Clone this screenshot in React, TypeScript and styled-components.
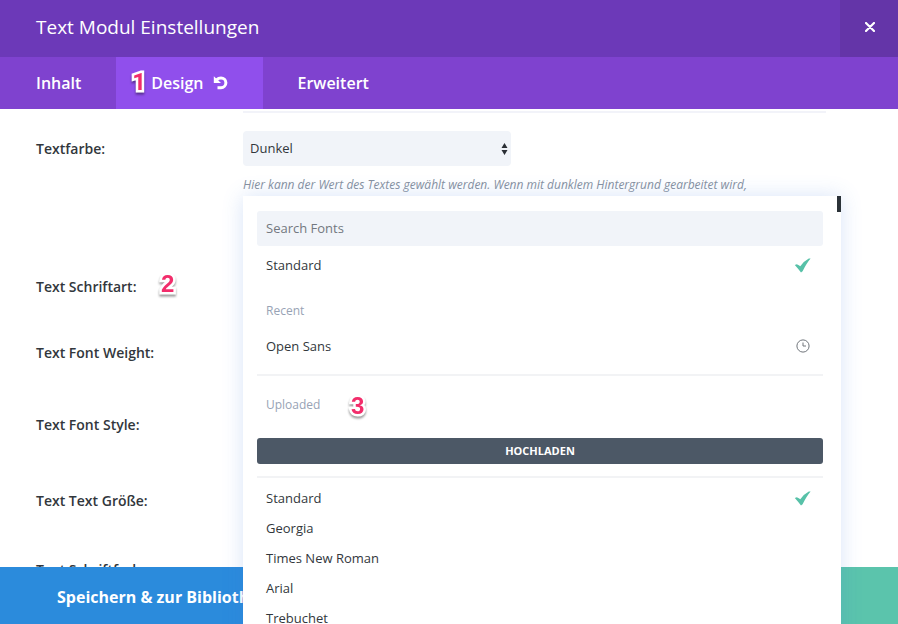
import React from "react";
import styled, { createGlobalStyle } from "styled-components";

const GlobalStyle = createGlobalStyle`
  *, *::before, *::after { box-sizing: border-box; }
  body {
    margin: 0;
    background: #fff;
    color: #32373c;
    font-family: "Open Sans", "Noto Sans", sans-serif;
    font-size: 13px;
  }
  button, input, select { font: inherit; color: inherit; }
`;

const Modal = styled.div`
  display: flex;
  flex-direction: column;
  height: 100vh;
  overflow: hidden;
`;

const Header = styled.header`
  display: flex;
  flex: none;
  align-items: stretch;
  justify-content: space-between;
  height: 57px;
  padding-left: 36px;
  background: #6c39b8;
  color: #fff;
`;

const Title = styled.h1`
  margin: 0;
  font-size: 19px;
  font-weight: 400;
  line-height: 54px;
`;

const CloseButton = styled.button`
  display: flex;
  align-items: center;
  justify-content: center;
  width: 58px;
  padding: 0 0 4px 2px;
  border: 0;
  background: #6435a8;
`;

const Tabs = styled.nav`
  display: flex;
  flex: none;
  height: 52px;
  padding-left: 1px;
  background: #7f42cf;
`;

const Tab = styled.button<{ $active?: boolean }>`
  position: relative;
  display: flex;
  align-items: center;
  gap: 9px;
  padding: 0 35px;
  border: 0;
  background: ${(p) => (p.$active ? "#904fec" : "transparent")};
  color: #fff;
  font-size: 16px;
  font-weight: 600;
`;

const Marker = styled.span<{ $x: number; $y: number }>`
  position: absolute;
  left: ${(p) => p.$x}px;
  top: ${(p) => p.$y}px;
  color: #f22d6b;
  font: 700 24px/26px "Liberation Sans", Arial, sans-serif;
  -webkit-text-stroke: 5px #fff;
  paint-order: stroke fill;
  filter: drop-shadow(0 2px 1px rgba(0, 0, 0, 0.4));
`;

const TabMarker = styled(Marker)`
  font-family: Roboto, sans-serif;
`;

const Body = styled.main`
  flex: 1;
  min-height: 0;
  padding: 0 57px 0 36px;
`;

const PreviousField = styled.div`
  height: 4px;
  margin: 0 15px 18px 207px;
  border-bottom: 2px solid #f2f3f9;
`;

const Row = styled.div<{ $height: number }>`
  position: relative;
  display: grid;
  grid-template-columns: 207px 1fr;
  height: ${(p) => p.$height}px;
`;

const Label = styled.label`
  font-size: 14px;
  font-weight: 600;
  line-height: 36px;
`;

const Field = styled.div`
  min-width: 0;
`;

const SelectBox = styled.div`
  position: relative;
  width: 268px;
  max-width: 100%;
  svg {
    position: absolute;
    right: 3px;
    top: 12px;
    pointer-events: none;
  }
`;

const Select = styled.select`
  display: block;
  width: 100%;
  height: 35px;
  padding: 0 24px 2px 7px;
  border: 0;
  border-radius: 4px;
  background: #f1f4f9;
  appearance: none;
`;

const Description = styled.p`
  margin: 9px 15px 0 0;
  color: #8791a0;
  font-size: 12px;
  font-style: italic;
  font-weight: 400;
  line-height: 20px;
`;

const Menu = styled.div`
  position: absolute;
  z-index: 2;
  top: -73px;
  left: 207px;
  right: 0;
  height: 600px;
  padding: 15px 18px 0 14px;
  background: #fff;
  box-shadow: 0 0 20px rgba(60, 120, 220, 0.2);
`;

const ScrollThumb = styled.div`
  position: absolute;
  top: 0;
  right: 0;
  width: 4px;
  height: 16px;
  background: #2b3238;
`;

const Search = styled.input`
  display: block;
  width: 100%;
  height: 35px;
  padding: 0 9px 2px;
  border: 0;
  border-radius: 3px;
  background: #f1f4f9;
  &::placeholder { color: #737880; opacity: 1; }
`;

const Group = styled.section<{ $top: number; $bottom: number; $ruled?: boolean }>`
  padding: ${(p) => p.$top}px 0 ${(p) => p.$bottom}px;
  border-bottom: ${(p) => (p.$ruled ? "2px solid #f2f3f5" : "0")};
`;

const GroupTitle = styled.h2`
  position: relative;
  margin: 0;
  padding: 0 9px;
  color: #98a3b5;
  font-size: 12px;
  font-weight: 400;
  line-height: 30px;
`;

const Option = styled.button`
  display: flex;
  align-items: center;
  justify-content: space-between;
  width: 100%;
  height: 30px;
  margin: 0;
  padding: 0 12px 0 9px;
  border: 0;
  background: none;
  text-align: left;
`;

const FontList = styled.div`
  display: grid;
  padding-top: 5px;
`;

const Upload = styled.button`
  display: block;
  width: 100%;
  height: 26px;
  margin-top: 18px;
  padding: 0 0 2px;
  border: 0;
  border-radius: 3px;
  background: #4c5866;
  color: #fff;
  font-size: 11px;
  font-weight: 700;
  text-transform: uppercase;
`;

const Footer = styled.footer`
  position: relative;
  z-index: 1;
  display: flex;
  flex: none;
  height: 57px;
`;

const FooterButton = styled.button<{ $color: string }>`
  flex: 1;
  padding: 2px 57px 0;
  overflow: hidden;
  border: 0;
  background: ${(p) => p.$color};
  color: #fff;
  font-size: 16px;
  font-weight: 700;
  text-align: left;
  white-space: nowrap;
`;

const CloseIcon = () => (
  <svg width="10" height="10" viewBox="0 0 10 10" aria-hidden="true">
    <path d="M1 1L9 9M9 1L1 9" stroke="#fff" strokeWidth="2.2" strokeLinecap="round" />
  </svg>
);

const ResetIcon = () => (
  <svg width="15" height="14" viewBox="0 0 15 14" aria-hidden="true">
    <path d="M3.500 3.800Q5.500 1.900 8 1.900A4.900 4.900 0 0 1 8 11.700H4.500" fill="none" stroke="#fff" strokeWidth="3" />
    <path d="M.8 .2V7H8Z" fill="#fff" />
  </svg>
);

const ArrowsIcon = () => (
  <svg width="7" height="12" viewBox="0 0 7 12" aria-hidden="true">
    <path d="M3.5 0L6.5 5H.5ZM3.5 12L.5 7H6.5Z" fill="#2b2f35" />
  </svg>
);

const CheckIcon = () => (
  <svg width="17" height="15" viewBox="0 0 17 15" aria-hidden="true">
    <path d="M.8 7L2.800 6.200Q5 7 6.300 8.200Q9.500 3.200 14.800 .4L16.600 .6Q12.800 5 8.600 13.200L7 14.600Q4 10.500 .8 7Z" fill="#57c1a8" />
  </svg>
);

const ClockIcon = () => (
  <svg width="15" height="14" viewBox="0 0 15 14" fill="none" stroke="#70757b" aria-hidden="true">
    <circle cx="7" cy="7" r="6.100" />
    <path d="M7 3.500V7H10" />
  </svg>
);

const fonts = ["Standard", "Georgia", "Times New Roman", "Arial", "Trebuchet"];

export default function App() {
  return (
    <Modal>
      <GlobalStyle />
      <Header>
        <Title>Text Modul Einstellungen</Title>
        <CloseButton aria-label="Schließen"><CloseIcon /></CloseButton>
      </Header>
      <Tabs>
        <Tab>Inhalt</Tab>
        <Tab $active>
          <TabMarker $x={16} $y={12}>1</TabMarker>
          Design
          <ResetIcon />
        </Tab>
        <Tab>Erweitert</Tab>
      </Tabs>
      <Body>
        <PreviousField />
        <Row $height={138}>
          <Label htmlFor="text-color">Textfarbe:</Label>
          <Field>
            <SelectBox>
              <Select id="text-color" defaultValue="Dunkel">
                <option>Dunkel</option>
              </Select>
              <ArrowsIcon />
            </SelectBox>
            <Description>
              Hier kann der Wert des Textes gewählt werden. Wenn mit dunklem Hintergrund gearbeitet wird,
            </Description>
          </Field>
        </Row>
        <Row $height={66}>
          <Label htmlFor="font-search">Text Schriftart:</Label>
          <Marker $x={125} $y={2}>2</Marker>
          <Menu>
            <ScrollThumb />
            <Search id="font-search" type="text" placeholder="Search Fonts" />
            <Group $top={4} $bottom={16}>
              <Option>Standard<CheckIcon /></Option>
            </Group>
            <Group $top={0} $bottom={13} $ruled>
              <GroupTitle>Recent</GroupTitle>
              <FontList><Option>Open Sans<ClockIcon /></Option></FontList>
            </Group>
            <Group $top={14} $bottom={12} $ruled>
              <GroupTitle>
                Uploaded
                <Marker $x={94} $y={3}>3</Marker>
              </GroupTitle>
              <Upload>Hochladen</Upload>
            </Group>
            <FontList>
              {fonts.map((font, i) => (
                <Option key={font}>{font}{i === 0 && <CheckIcon />}</Option>
              ))}
            </FontList>
          </Menu>
        </Row>
        <Row $height={72}><Label>Text Font Weight:</Label></Row>
        <Row $height={76}><Label>Text Font Style:</Label></Row>
        <Row $height={69}><Label>Text Text Größe:</Label></Row>
        <Row $height={72}><Label>Text Schriftfarbe:</Label></Row>
      </Body>
      <Footer>
        <FooterButton $color="#2b8bdc">Speichern &amp; zur Bibliothek</FooterButton>
        <FooterButton $color="#5bc4ac" aria-label="Speichern" />
      </Footer>
    </Modal>
  );
}
